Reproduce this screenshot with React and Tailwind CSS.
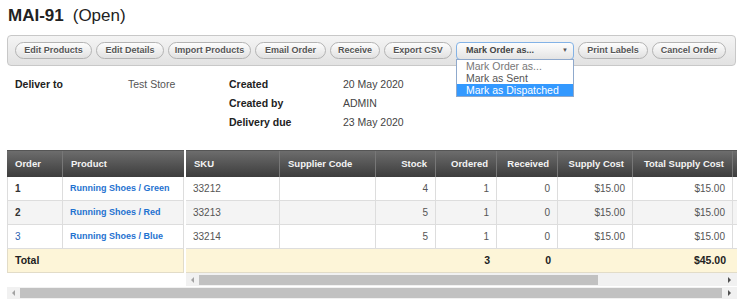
import React, { useState } from 'react';

const buttons = [
  { label: 'Edit Products', w: 'w-[77px]' },
  { label: 'Edit Details', w: 'w-[68px]' },
  { label: 'Import Products', w: 'w-[83px]' },
  { label: 'Email Order', w: 'w-[71px]' },
  { label: 'Receive', w: 'w-[50px]' },
  { label: 'Export CSV', w: 'w-[68px]' },
];

const rightCols = [
  { key: 'sku', label: 'SKU', w: 'w-[94px]' },
  { key: 'code', label: 'Supplier Code', w: 'w-[96px]' },
  { key: 'stock', label: 'Stock', w: 'w-[60px]', right: true },
  { key: 'ordered', label: 'Ordered', w: 'w-[61px]', right: true },
  { key: 'received', label: 'Received', w: 'w-[61px]', right: true },
  { key: 'cost', label: 'Supply Cost', w: 'w-[75px]', right: true },
  { key: 'total', label: 'Total Supply Cost', w: 'w-[100px]', right: true },
  { key: 'landed', label: '', w: 'w-[80px]', right: true },
];

const rows = [
  { order: '1', product: 'Running Shoes / Green', sku: '33212', code: '', stock: '4', ordered: '1', received: '0', cost: '$15.00', total: '$15.00', landed: '' },
  { order: '2', product: 'Running Shoes / Red', sku: '33213', code: '', stock: '5', ordered: '1', received: '0', cost: '$15.00', total: '$15.00', landed: '' },
  { order: '3', product: 'Running Shoes / Blue', sku: '33214', code: '', stock: '5', ordered: '1', received: '0', cost: '$15.00', total: '$15.00', landed: '' },
];

const totals = { ordered: '3', received: '0', total: '$45.00' };

const options = ['Mark Order as...', 'Mark as Sent', 'Mark as Dispatched'];

const LeftArrow = () => (
  <div className="w-[13px] h-full flex items-center justify-center">
    <div className="w-0 h-0 border-y-[3px] border-y-transparent border-r-[3px] border-r-[#a3a3a3]" />
  </div>
);

const RightArrow = () => (
  <div className="w-[15px] h-full flex items-center justify-center">
    <div className="w-0 h-0 border-y-[3px] border-y-transparent border-l-[3px] border-l-[#505050]" />
  </div>
);

const HeaderCell = ({ children, w, right, last }) => (
  <div
    className={`${w} shrink-0 h-full flex items-center px-[8px] font-bold text-[9.5px] text-[#f4f4f4] ${
      right ? 'justify-end' : ''
    } ${last ? '' : 'border-r border-[#777]'}`}
  >
    {children}
  </div>
);

const App = () => {
  const [selected] = useState(2);

  return (
    <div className="w-[743px] h-[305px] overflow-hidden bg-white font-['Liberation_Sans',Arial,sans-serif]">
      <h1 className="mt-[6px] ml-[8px] h-[20px] leading-[20px] text-[17px] text-[#222]">
        <span className="font-bold">MAI-91</span>
        <span className="ml-[9px]">(Open)</span>
      </h1>

      <div className="mt-[9px] ml-[7px] w-[729px] h-[31px] rounded-[4px] border border-[#c8c8c8] bg-gradient-to-b from-[#f4f4f4] to-[#e2e2e2] flex items-center pl-[7px] gap-[4px]">
        {buttons.map((b) => (
          <button
            key={b.label}
            className={`${b.w} h-[17px] rounded-full border border-[#b3b3b3] bg-gradient-to-b from-[#fdfdfd] to-[#e1e1e1] text-[9px] font-bold text-[#555] [text-shadow:0_1px_0_#fff] flex items-center justify-center`}
          >
            {b.label}
          </button>
        ))}
        <div className="relative w-[118px] h-[18px]">
          <div className="h-full rounded-[4px] border border-[#82b2e6] bg-gradient-to-b from-[#fdfdfd] to-[#e4e4e4] flex items-center pl-[9px] pr-[5px] text-[9px] font-bold text-[#444]">
            <span className="flex-1">Mark Order as...</span>
            <span className="text-[6px] text-[#555]">▼</span>
          </div>
          <ul className="absolute left-0 top-[17px] w-[118px] bg-white border border-[#8fa9cc] z-10">
            {options.map((o, i) => (
              <li
                key={o}
                className={`h-[12px] leading-[12px] pl-[9px] text-[10.5px] ${
                  i === selected ? 'bg-[#3399ff] text-white' : i === 0 ? 'text-[#777]' : 'text-[#555]'
                }`}
              >
                {o}
              </li>
            ))}
          </ul>
        </div>
        <button className="w-[70px] h-[17px] rounded-full border border-[#b3b3b3] bg-gradient-to-b from-[#fdfdfd] to-[#e1e1e1] text-[9px] font-bold text-[#555] [text-shadow:0_1px_0_#fff] flex items-center justify-center">
          Print Labels
        </button>
        <button className="w-[74px] h-[17px] rounded-full border border-[#b3b3b3] bg-gradient-to-b from-[#fdfdfd] to-[#e1e1e1] text-[9px] font-bold text-[#555] [text-shadow:0_1px_0_#fff] flex items-center justify-center">
          Cancel Order
        </button>
      </div>

      <div className="mt-[9px] ml-[15px] grid grid-cols-[113px_101px_114px_100px] auto-rows-[19px] items-center text-[10.5px]">
        <div className="font-bold text-[#222]">Deliver to</div>
        <div className="text-[#555]">Test Store</div>
        <div className="font-bold text-[#222]">Created</div>
        <div className="text-[#444]">20 May 2020</div>
        <div />
        <div />
        <div className="font-bold text-[#222]">Created by</div>
        <div className="text-[#444]">ADMIN</div>
        <div />
        <div />
        <div className="font-bold text-[#222]">Delivery due</div>
        <div className="text-[#444]">23 May 2020</div>
      </div>

      <div className="mt-[18px] ml-[7px] flex gap-[2px]">
        <div className="w-[177px] shrink-0">
          <div className="h-[27px] flex bg-gradient-to-b from-[#6d6d6d] to-[#3d3d3d] border-t border-[#555]">
            <HeaderCell w="w-[56px]">Order</HeaderCell>
            <HeaderCell w="w-[121px]" last>Product</HeaderCell>
          </div>
          {rows.map((r, i) => (
            <div
              key={r.order}
              className={`h-[24px] flex border-b border-l border-[#ddd] text-[10px] ${i === 1 ? 'bg-[#f4f4f4]' : 'bg-white'}`}
            >
              <div
                className={`w-[55px] px-[7px] flex items-center border-r border-[#ddd] ${
                  i === 2 ? 'text-[#2a62b0]' : 'font-bold text-[#333]'
                }`}
              >
                {r.order}
              </div>
              <div className="w-[121px] px-[7px] flex items-center border-r border-[#ddd] font-bold text-[9px] text-[#1f72d0]">
                {r.product}
              </div>
            </div>
          ))}
          <div className="h-[24px] flex items-center px-[7px] bg-[#fdf5d8] border border-t-0 border-[#e2dcc8] font-bold text-[10.5px] text-[#222]">
            Total
          </div>
        </div>

        <div className="w-[551px] shrink-0 overflow-hidden">
          <div className="w-[627px]">
            <div className="h-[27px] flex bg-gradient-to-b from-[#6d6d6d] to-[#3d3d3d] border-t border-[#555]">
              {rightCols.map((c, i) => (
                <HeaderCell key={c.key} w={c.w} right={c.right} last={i === rightCols.length - 1}>
                  {c.label}
                </HeaderCell>
              ))}
            </div>
            {rows.map((r, i) => (
              <div
                key={r.sku}
                className={`h-[24px] flex border-b border-[#ddd] text-[10px] text-[#555] ${i === 1 ? 'bg-[#f4f4f4]' : 'bg-white'}`}
              >
                {rightCols.map((c) => (
                  <div
                    key={c.key}
                    className={`${c.w} shrink-0 px-[7px] flex items-center border-r border-[#ddd] ${c.right ? 'justify-end' : ''}`}
                  >
                    {r[c.key]}
                  </div>
                ))}
              </div>
            ))}
            <div className="h-[24px] flex bg-[#fdf5d8] border-b border-[#e2dcc8] font-bold text-[10.5px] text-[#222]">
              {rightCols.map((c) => (
                <div key={c.key} className={`${c.w} shrink-0 px-[7px] flex items-center justify-end`}>
                  {totals[c.key] || ''}
                </div>
              ))}
            </div>
          </div>
          <div className="h-[13px] flex bg-[#f1f1f1]">
            <LeftArrow />
            <div className="w-[399px] h-[10px] self-center bg-[#c1c1c1]" />
            <div className="flex-1" />
            <RightArrow />
          </div>
        </div>
      </div>

      <div className="mt-[1px] ml-[7px] w-[730px] h-[12px] flex bg-[#f1f1f1]">
        <LeftArrow />
        <div className="w-[702px] h-[10px] self-center bg-[#c1c1c1]" />
        <div className="flex-1" />
        <RightArrow />
      </div>
    </div>
  );
};

export default App;
